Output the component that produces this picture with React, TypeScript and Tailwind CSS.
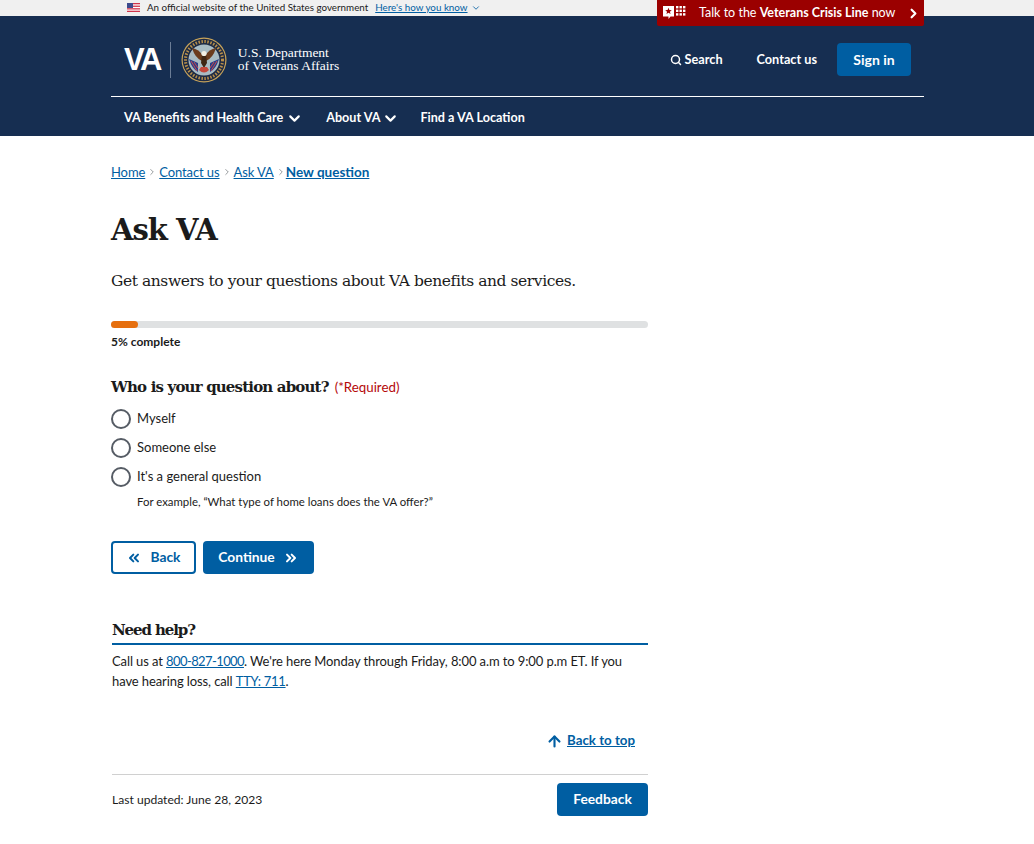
import { ChevronDown, ChevronRight, ChevronsLeft, ChevronsRight, ArrowUp, Search } from "lucide-react";

const SANS = "font-['Lato','Noto_Sans',sans-serif]";
const SLAB = "font-['DejaVu_Serif','Liberation_Serif',serif]";

function Flag() {
  return (
    <svg width="13" height="9" viewBox="0 0 13 9" className="mr-[7px]">
      <rect width="13" height="9" fill="#fff" />
      <rect y="0" width="13" height="1.3" fill="#d0344a" />
      <rect y="2.6" width="13" height="1.3" fill="#d0344a" />
      <rect y="5.2" width="13" height="1.3" fill="#d0344a" />
      <rect y="7.7" width="13" height="1.3" fill="#d0344a" />
      <rect width="6" height="5" fill="#3c4a8c" />
    </svg>
  );
}

function Seal() {
  return (
    <svg width="46" height="46" viewBox="0 0 46 46" className="block">
      <circle cx="23" cy="23" r="22.5" fill="#c8a45a" />
      <circle cx="23" cy="23" r="21.3" fill="#1d2a44" />
      <circle cx="23" cy="23" r="18.5" fill="none" stroke="#b88f4a" strokeWidth="3" strokeDasharray="1.5 1.5" />
      <circle cx="23" cy="23" r="15.5" fill="#a9bcc4" />
      <path d="M8 22 L17 26 L17 35 Q11 32 8 22 Z" fill="#27408b" />
      <path d="M38 22 L29 26 L29 35 Q35 32 38 22 Z" fill="#27408b" />
      <path d="M10 24 L16 34 M13 25 L17 31 M36 24 L30 34 M33 25 L29 31" stroke="#c94a4a" strokeWidth="1" />
      <path d="M21 24 Q14 21 11 11 Q18 12 22 19 Z" fill="#6b3c1e" />
      <path d="M25 24 Q32 21 35 11 Q28 12 24 19 Z" fill="#6b3c1e" />
      <path d="M20 26 L21 18 Q23 15 25 17 L26 26 L23 31 Z" fill="#3f2614" />
      <circle cx="23" cy="16.5" r="2.6" fill="#f3efe4" />
      <path d="M18 33 Q23 38 28 33 L26 30 L20 30 Z" fill="#c4483c" />
    </svg>
  );
}

function CrisisIcon() {
  return (
    <svg width="24" height="16" viewBox="0 0 24 16" className="shrink-0">
      <path d="M0 1 H11 V11.5 H7.5 L5.5 14 V11.5 H0 Z" fill="#fff" />
      <path d="M5.5 2.8 L6.4 5.1 L8.8 5.2 L6.9 6.7 L7.6 9 L5.5 7.7 L3.4 9 L4.1 6.7 L2.2 5.2 L4.6 5.1 Z" fill="#9b0000" />
      <g fill="#fff">
        <rect x="13" y="1" width="2.4" height="2.4" />
        <rect x="16.5" y="1" width="2.4" height="2.4" />
        <rect x="20" y="1" width="2.4" height="2.4" />
        <rect x="13" y="4.6" width="2.4" height="2.4" />
        <rect x="16.5" y="4.6" width="2.4" height="2.4" />
        <rect x="20" y="4.6" width="2.4" height="2.4" />
        <rect x="13" y="8.2" width="2.4" height="2.4" />
        <rect x="16.5" y="8.2" width="2.4" height="2.4" />
        <rect x="20" y="8.2" width="2.4" height="2.4" />
      </g>
    </svg>
  );
}

function Radio({ label }: { label: string }) {
  return (
    <div className="flex items-center h-[20px] gap-[6px]">
      <span className="w-[20px] h-[20px] rounded-full border-2 border-[#565c65] bg-white shrink-0" />
      <span className="text-[13px] text-[#1b1b1b]">{label}</span>
    </div>
  );
}

export default function App() {
  const crumbs = ["Home", "Contact us", "Ask VA"];

  return (
    <div className={`${SANS} relative min-h-[844px] bg-white text-[#1b1b1b]`}>
      {/* Official banner */}
      <div className="h-[16px] pb-px bg-[#f0f0f0] flex items-center pl-[127px] text-[9.8px] leading-none">
        <Flag />
        <span>An official website of the United States government</span>
        <a className="ml-[7px] text-[#005ea2] underline">Here's how you know</a>
        <ChevronDown size={10} strokeWidth={2} className="ml-[3px] text-[#005ea2]" />
      </div>

      {/* Crisis line */}
      <div className="absolute top-0 left-[657px] w-[267px] h-[26px] bg-[#9b0000] rounded-b-[2px] flex items-center pl-[6px] pr-[3px] text-white text-[12.5px] whitespace-nowrap">
        <CrisisIcon />
        <span className="ml-[12px]">
          Talk to the <b>Veterans Crisis Line</b> now
        </span>
        <ChevronRight size={15} strokeWidth={3.5} className="ml-auto" />
      </div>

      {/* Header */}
      <header className="bg-[#162e51] text-white h-[120px]">
        <div className="ml-[111px] w-[813px]">
          <div className="h-[81px] pt-[7px] border-b border-white flex items-center px-[13px]">
            <span className="font-['Liberation_Sans',sans-serif] font-bold text-[31px] tracking-[-2.5px] leading-none">VA</span>
            <span className="ml-[10px] w-px h-[36px] bg-[#6b7d96]" />
            <span className="ml-[10px]"><Seal /></span>
            <div className="ml-[11px] -mt-px font-['Liberation_Serif',serif] text-[13.5px] leading-[13px]">
              <div>U.S. Department</div>
              <div>of Veterans Affairs</div>
            </div>
            <div className="ml-auto flex items-center font-bold text-[12.7px]">
              <Search size={12} strokeWidth={3} className="mr-[3px]" />
              <span>Search</span>
              <span className="ml-[34px]">Contact us</span>
              <span className="ml-[20px] w-[74px] h-[33px] flex items-center justify-center bg-[#005ea2] rounded-[4px] text-[14px]">Sign in</span>
            </div>
          </div>
          <nav className="h-[39px] pl-[13px] pt-[3px] flex items-center font-bold text-[12.6px]">
            <span>VA Benefits and Health Care</span>
            <ChevronDown size={17} strokeWidth={3} className="ml-[3px]" />
            <span className="ml-[23px]">About VA</span>
            <ChevronDown size={17} strokeWidth={3} className="ml-[2px]" />
            <span className="ml-[21px]">Find a VA Location</span>
          </nav>
        </div>
      </header>

      <main className="ml-[111px] w-[537px]">
        {/* Breadcrumb */}
        <div className="pt-[27px] h-[54px] flex items-start text-[13px] leading-[18px] tracking-[-0.1px]">
          {crumbs.map((c) => (
            <span key={c} className="flex items-center h-[18px]">
              <a className="text-[#005ea2] underline">{c}</a>
              <ChevronRight size={10} strokeWidth={1.75} className="mx-[2px] text-[#71767a]" />
            </span>
          ))}
          <a className="-ml-[2px] text-[#005ea2] underline font-bold text-[13.5px] tracking-normal">New question</a>
        </div>

        <h1 className={`${SLAB} font-bold text-[29px] leading-[40px] mt-[20px] tracking-[-1px]`}>Ask VA</h1>
        <p className={`${SLAB} text-[15.5px] leading-[24px] mt-[19px] tracking-[-0.43px] whitespace-nowrap`}>
          Get answers to your questions about VA benefits and services.
        </p>

        {/* Progress */}
        <div className="mt-[28px] h-[7px] rounded-full bg-[#dfe1e2]">
          <div className="h-full w-[27px] rounded-full bg-[#e66f0e]" />
        </div>
        <div className="mt-[6px] text-[12px] leading-[16px] font-bold">5% complete</div>

        {/* Question */}
        <div className="mt-[26px] flex items-baseline">
          <h2 className={`${SLAB} font-bold text-[15px] leading-[22px] tracking-[-0.83px]`}>Who is your question about?</h2>
          <span className="ml-[6px] text-[13.3px] text-[#b50909]">(*Required)</span>
        </div>
        <div className="mt-[11px] flex flex-col gap-[9px]">
          <Radio label="Myself" />
          <Radio label="Someone else" />
          <Radio label="It's a general question" />
        </div>
        <div className="ml-[26px] mt-[7px] text-[11.4px] leading-[16px]">
          For example, “What type of home loans does the VA offer?”
        </div>

        {/* Buttons */}
        <div className="mt-[31px] flex gap-[7px] font-bold text-[13.8px]">
          <button className="w-[85px] h-[33px] flex items-center justify-center gap-[8px] rounded-[4px] border-2 border-[#005ea2] text-[#005ea2] bg-white">
            <ChevronsLeft size={16} strokeWidth={3} />
            Back
          </button>
          <button className="w-[111px] h-[33px] flex items-center justify-center gap-[8px] rounded-[4px] bg-[#005ea2] text-white">
            Continue
            <ChevronsRight size={16} strokeWidth={3} />
          </button>
        </div>

        {/* Need help */}
        <div className="ml-px mt-[45px] border-b-2 border-[#005ea2] pb-[2px]">
          <h2 className={`${SLAB} font-bold text-[15px] leading-[22px] tracking-[-1.1px]`}>Need help?</h2>
        </div>
        <p className="ml-px mt-[6px] text-[13px] leading-[20px] tracking-[-0.1px]">
          Call us at <a className="text-[#005ea2] underline tracking-[-0.6px]">800-827-1000</a>. We're here Monday through Friday, 8:00 a.m to 9:00 p.m ET. If you have hearing loss, call <a className="text-[#005ea2] underline tracking-[-0.3px]">TTY: 711</a>.
        </p>

        {/* Back to top */}
        <div className="mt-[40px] pr-[13px] flex items-center justify-end h-[20px] text-[13.3px] font-bold text-[#005ea2]">
          <ArrowUp size={17} strokeWidth={3} className="mr-[4px]" />
          <a className="underline">Back to top</a>
        </div>

        {/* Footer row */}
        <div className="ml-px mt-[23px] border-t border-[#d0d0d0] pt-[8px] flex items-center justify-between">
          <span className="pt-[2px] text-[12.1px]">Last updated: June 28, 2023</span>
          <span className="w-[91px] h-[33px] flex items-center justify-center rounded-[4px] bg-[#005ea2] text-white font-bold text-[13.8px]">Feedback</span>
        </div>
      </main>
    </div>
  );
}
